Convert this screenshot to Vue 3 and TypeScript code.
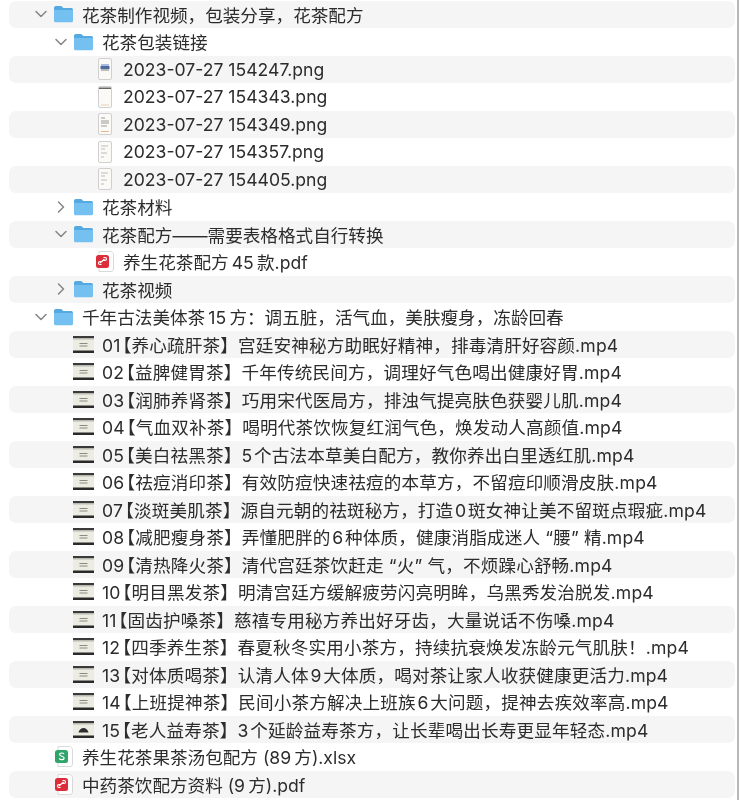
<template>
  <div class="finder">
    <div v-for="(row, index) in rows" :key="index" class="row" :style="{ paddingLeft: `${row.indent}px` }">
      <span class="chevron">
        <svg v-if="row.open !== undefined" width="14" height="14" viewBox="0 0 14 14" :class="{ closed: !row.open }">
          <path d="M2 4.500 7 9.500 12 4.500" fill="none" stroke="#858585" stroke-width="1.500" stroke-linecap="round" stroke-linejoin="round" />
        </svg>
      </span>
      <span class="icon">
        <svg v-if="row.type === 'folder'" width="21" height="18" viewBox="0 0 21 18">
          <path d="M1 3.200C1 1.900 1.800 1 3 1h4.600c.8 0 1.300.3 1.800.9l.8 1h8c1.200 0 1.800.8 1.800 2v2H1z" fill="#55a9e0" />
          <path d="M1 5h19v10.400c0 1.200-.7 1.900-1.900 1.900H2.900C1.700 17.300 1 16.600 1 15.400z" fill="#74c0f0" />
        </svg>

        <svg v-else-if="row.type === 'video'" width="21" height="17" viewBox="0 0 21 17">
          <rect x="0" y="0" width="21" height="17" fill="#ecece2" />
          <rect x="0" y="0" width="21" height="2" fill="#3a3a3a" />
          <rect x="0" y="14.500" width="21" height="2.500" fill="#2a2a2a" />
          <rect x="0" y="2" width="21" height="1.500" fill="#b9b9b0" />
          <path v-if="!row.oldman" d="M6.500 7.500h8M6.500 10h8" stroke="#8a8a80" stroke-width="1" />
          <path v-else d="M5.500 11.500c.8-3 2.700-4.500 5-4.500s4.200 1.500 5 4.500z" fill="#2e2e2e" />
        </svg>

        <svg v-else-if="row.type === 'pdf'" width="20" height="21" viewBox="0 0 20 21">
          <path d="M4 .5h11.500c1.300 0 3 1.500 3 3V18c0 1.300-1 2.500-2.500 2.500H4z" fill="#fff" stroke="#cfcfcf" stroke-width=".8" />
          <rect x="1" y="4" width="13" height="13" rx="2.500" fill="#dc2e3a" />
          <path d="M5 12 9.500 8M8.500 6.500h1.500a1.500 1.500 0 0 1 0 3h-1.500M6.500 13.500H5a1.500 1.500 0 0 1 0-3h1.500" fill="none" stroke="#fff" stroke-width="1.200" />
        </svg>

        <svg v-else-if="row.type === 'xlsx'" width="20" height="21" viewBox="0 0 20 21">
          <path d="M4 .5h11.500c1.300 0 3 1.500 3 3V18c0 1.300-1 2.500-2.500 2.500H4z" fill="#fff" stroke="#cfcfcf" stroke-width=".8" />
          <rect x="1" y="4" width="13" height="13" rx="2.500" fill="#2fa56a" />
          <path d="M10 8C9.500 7.300 8.700 7 7.700 7 6.500 7 5.600 7.600 5.600 8.600c0 2.200 4.500 1.100 4.500 3.400C10.100 13 9.100 13.700 7.700 13.700c-1.100 0-2-.5-2.500-1.300" fill="none" stroke="#fff" stroke-width="1.200" />
        </svg>

        <svg v-else width="18" height="22" viewBox="0 0 18 22">
          <rect x="2.500" y="0.500" width="13" height="21" rx="1.500" fill="#fbfaf7" stroke="#d0d0d0" />
          <template v-if="row.thumb === 0">
            <rect x="5" y="6" width="8" height="2" fill="#a9bcdc" />
            <rect x="4.500" y="8" width="9" height="3" fill="#4e6a9f" />
            <rect x="5" y="11" width="8" height="2" fill="#b9b9b9" />
          </template>
          <template v-else-if="row.thumb === 1">
            <rect x="3" y="1.500" width="12" height="1.500" fill="#666" />
            <rect x="5" y="18.500" width="8" height="1" fill="#e5d2b0" />
          </template>
          <template v-else-if="row.thumb === 2">
            <path d="M5 5h4M5 8h8M5 10h8M5 13h6" stroke="#9a9a9a" />
            <rect x="5" y="18" width="8" height="1" fill="#e5b890" />
          </template>
          <path v-else d="M5 5h7M5 8h4M5 12h6M5 16h3" stroke="#bbb" />
        </svg>
      </span>
      <span v-if="row.type === 'video'" class="name video-name">{{ row.name.split('【')[0] }}<span class="bracket">【</span>{{ row.name.split('【')[1] }}</span>
      <span v-else class="name">{{ row.name }}</span>
    </div>
  </div>
</template>

<script setup lang="ts">
interface Row {
  name: string
  type: 'folder' | 'png' | 'pdf' | 'xlsx' | 'video'
  indent: number
  open?: boolean
  thumb?: number
  oldman?: boolean
}

const png = (name: string, thumb: number): Row => ({ name, type: 'png', indent: 66, thumb })
const video = (name: string, oldman = false): Row => ({ name, type: 'video', indent: 45, oldman })

const rows: Row[] = [
  { name: '花茶制作视频，包装分享，花茶配方', type: 'folder', indent: 25, open: true },
  { name: '花茶包装链接', type: 'folder', indent: 45, open: true },
  png('2023-07-27 154247.png', 0),
  png('2023-07-27 154343.png', 1),
  png('2023-07-27 154349.png', 2),
  png('2023-07-27 154357.png', 3),
  png('2023-07-27 154405.png', 3),
  { name: '花茶材料', type: 'folder', indent: 45, open: false },
  { name: '花茶配方——需要表格格式自行转换', type: 'folder', indent: 45, open: true },
  { name: '养生花茶配方\u200945\u2009款.pdf', type: 'pdf', indent: 66 },
  { name: '花茶视频', type: 'folder', indent: 45, open: false },
  { name: '千年古法美体茶\u200915\u2009方：调五脏，活气血，美肤瘦身，冻龄回春', type: 'folder', indent: 25, open: true },
  video('01【养心疏肝茶】宫廷安神秘方助眠好精神，排毒清肝好容颜.mp4'),
  video('02【益脾健胃茶】千年传统民间方，调理好气色喝出健康好胃.mp4'),
  video('03【润肺养肾茶】巧用宋代医局方，排浊气提亮肤色获婴儿肌.mp4'),
  video('04【气血双补茶】喝明代茶饮恢复红润气色，焕发动人高颜值.mp4'),
  video('05【美白祛黑茶】5\u200a个古法本草美白配方，教你养出白里透红肌.mp4'),
  video('06【祛痘消印茶】有效防痘快速祛痘的本草方，不留痘印顺滑皮肤.mp4'),
  video('07【淡斑美肌茶】源自元朝的祛斑秘方，打造\u200a0\u200a斑女神让美不留斑点瑕疵.mp4'),
  video('08【减肥瘦身茶】弄懂肥胖的\u200a6\u200a种体质，健康消脂成迷人 “腰” 精.mp4'),
  video('09【清热降火茶】清代宫廷茶饮赶走 “火” 气，不烦躁心舒畅.mp4'),
  video('10【明目黑发茶】明清宫廷方缓解疲劳闪亮明眸，乌黑秀发治脱发.mp4'),
  video('11【固齿护嗓茶】慈禧专用秘方养出好牙齿，大量说话不伤嗓.mp4'),
  video('12【四季养生茶】春夏秋冬实用小茶方，持续抗衰焕发冻龄元气肌肤！.mp4'),
  video('13【对体质喝茶】认清人体\u200a9\u200a大体质，喝对茶让家人收获健康更活力.mp4'),
  video('14【上班提神茶】民间小茶方解决上班族\u200a6\u200a大问题，提神去疾效率高.mp4'),
  video('15【老人益寿茶】3\u200a个延龄益寿茶方，让长辈喝出长寿更显年轻态.mp4', true),
  { name: '养生花茶果茶汤包配方 (89\u2009方).xlsx', type: 'xlsx', indent: 25 },
  { name: '中药茶饮配方资料 (9\u2009方).pdf', type: 'pdf', indent: 25 },
]
</script>

<style scoped>
.finder {
  width: 739px;
  height: 800px;
  box-sizing: border-box;
  padding: 0.5px 2px 0 9px;
  border-right: 2px solid #b8b8b8;
  background: #fff;
  overflow: hidden;
  font-family: "Inter", "Noto Sans CJK SC", sans-serif;
  font-size: 17.6px;
  color: #2c2c2c;
  filter: blur(0.4px);
}

.row {
  display: flex;
  align-items: center;
  height: 27.5px;
  border-radius: 7px;
  white-space: nowrap;
}

.row:nth-child(odd) {
  background: #f5f5f5;
}

.chevron {
  flex: none;
  width: 14px;
  height: 14px;
  margin-right: 5px;
}

.chevron svg {
  display: block;
}

.chevron svg.closed {
  transform: rotate(-90deg);
}

.icon {
  flex: none;
  display: flex;
  align-items: center;
  justify-content: center;
  width: 21px;
  margin-right: 8px;
}

.video-name {
  letter-spacing: 0.15px;
}

.bracket {
  margin-left: 2px;
  font-feature-settings: "halt";
}
</style>
